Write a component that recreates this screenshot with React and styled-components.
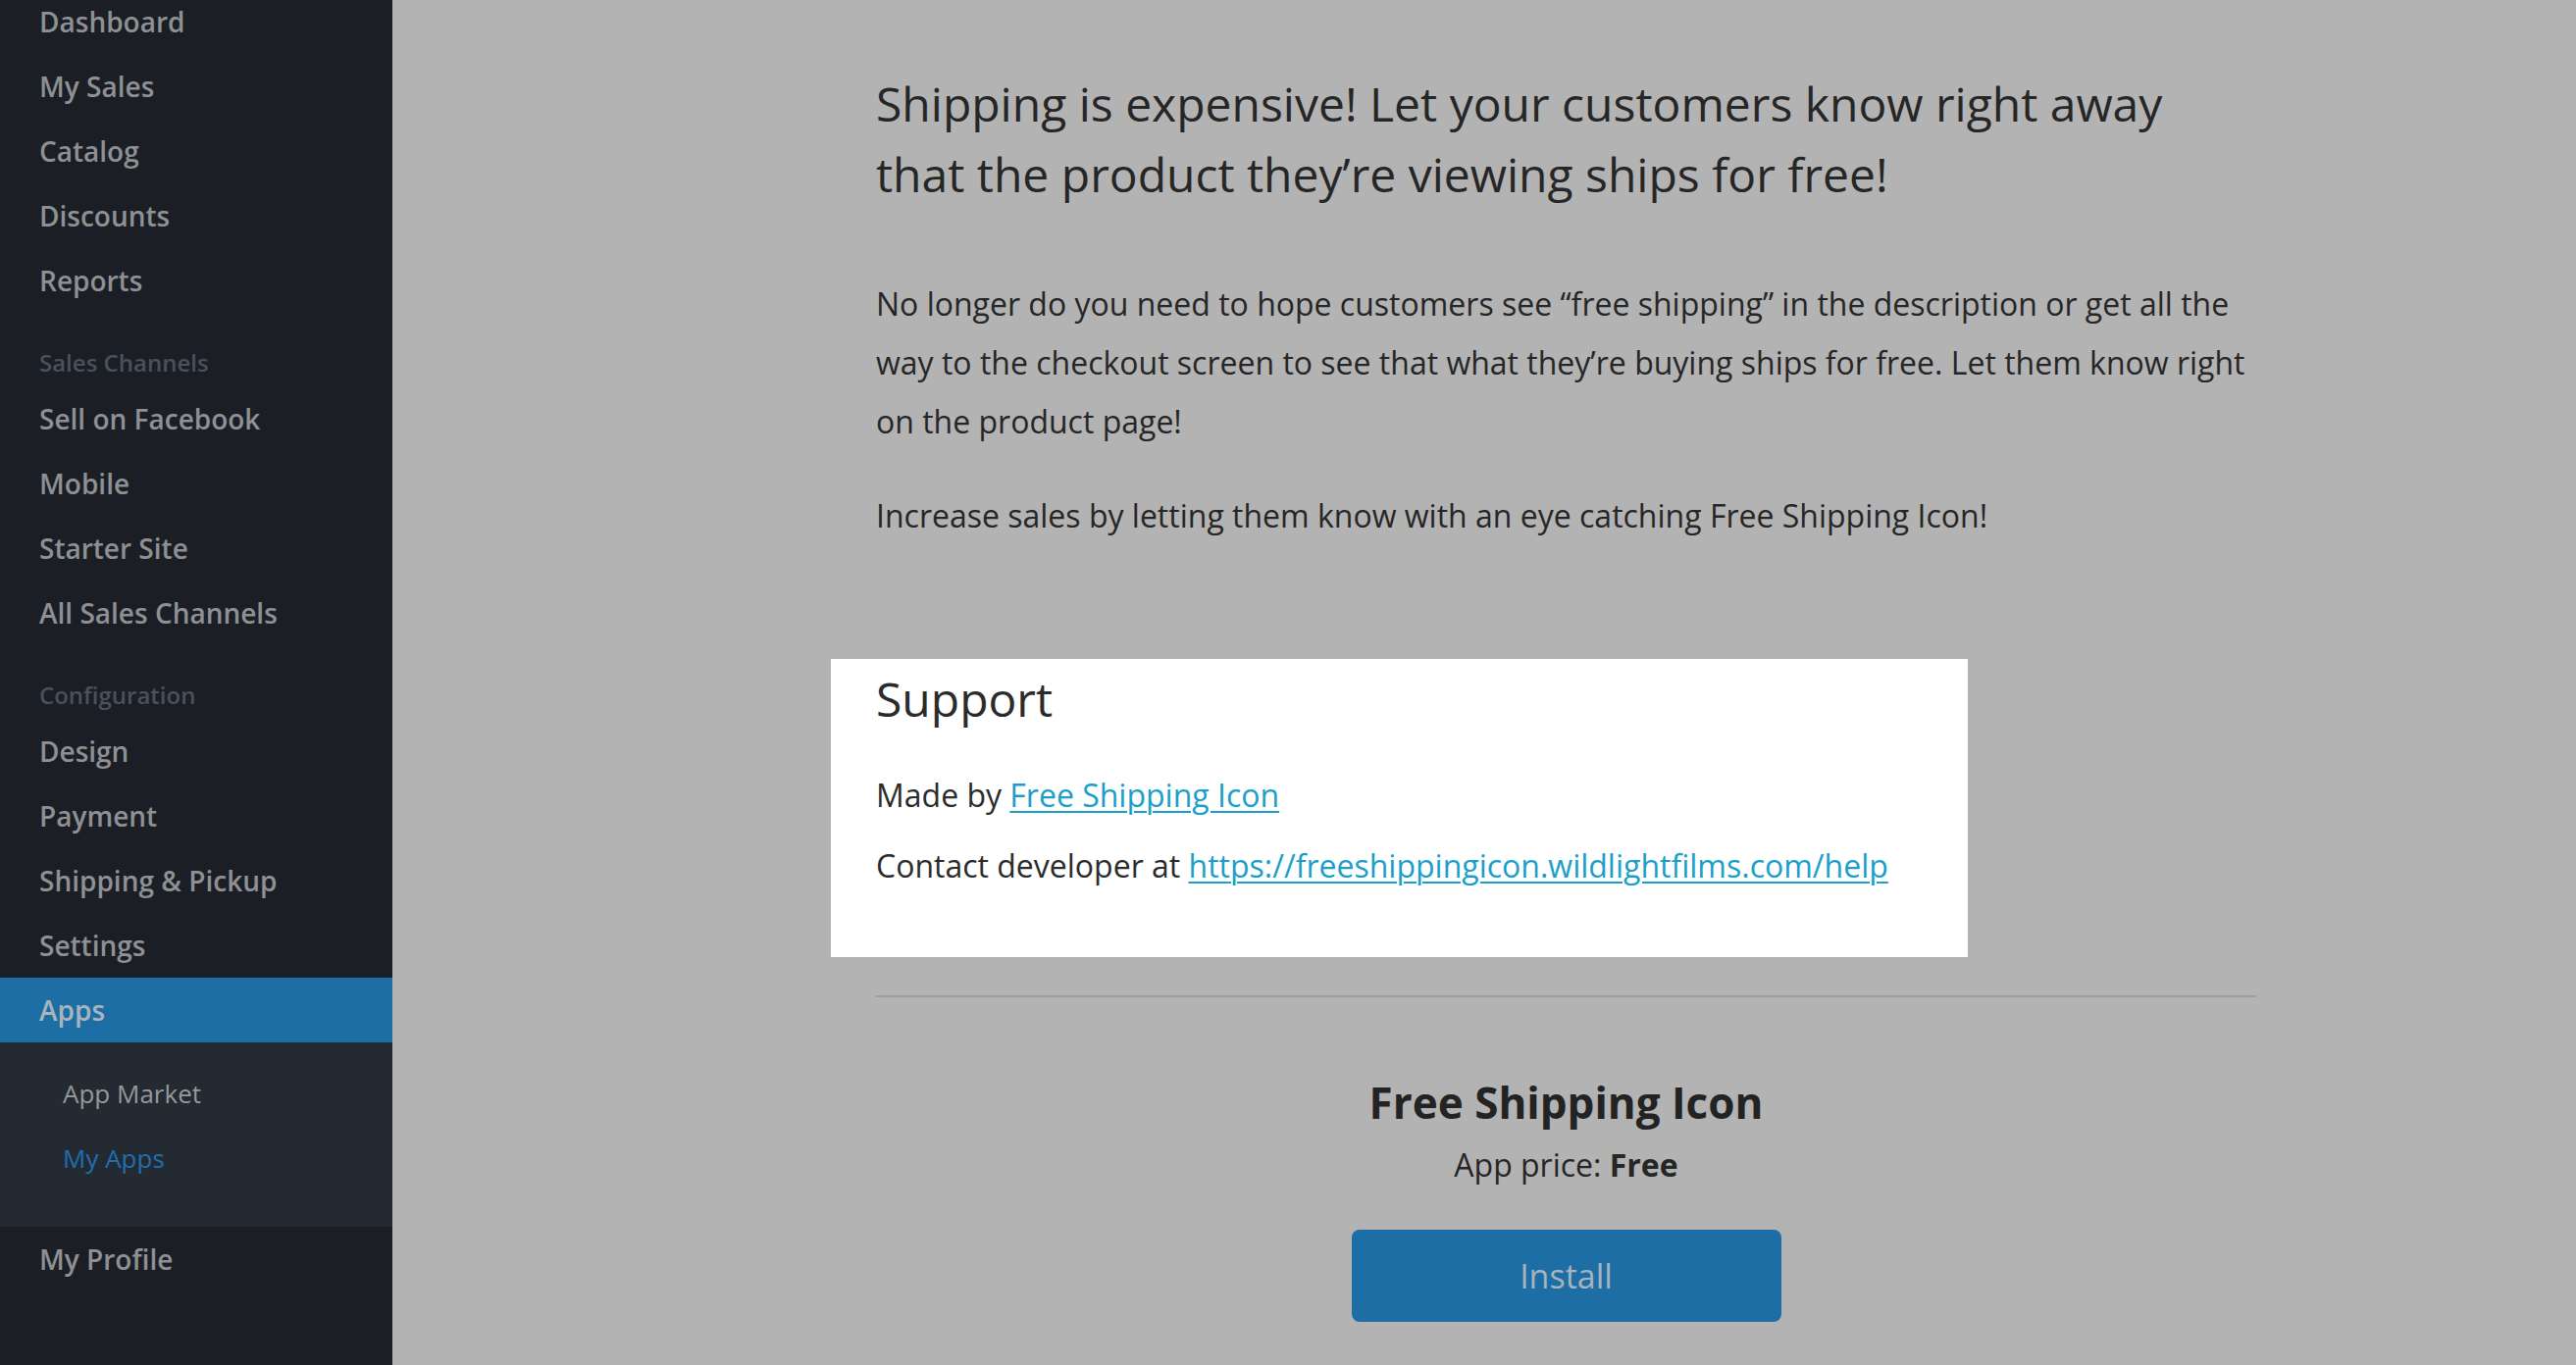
import React from "react";
import styled, { createGlobalStyle } from "styled-components";

const GlobalStyle = createGlobalStyle`
  html, body {
    margin: 0;
    padding: 0;
    height: 100%;
    overflow: hidden;
  }
  body {
    font-family: "Open Sans", "Noto Sans", "Liberation Sans", sans-serif;
    background: #b3b3b3;
  }
`;

const navTop = ["Dashboard", "My Sales", "Catalog", "Discounts", "Reports"];
const channels = ["Sell on Facebook", "Mobile", "Starter Site", "All Sales Channels"];
const config = ["Design", "Payment", "Shipping & Pickup", "Settings"];

const App = () => {
  return (
    <Page>
      <GlobalStyle />
      <Sidebar>
        <NavList>
          {navTop.map((n) => (
            <NavItem key={n}>{n}</NavItem>
          ))}
          <SectionLabel>Sales Channels</SectionLabel>
          {channels.map((c) => (
            <NavItem key={c}>{c}</NavItem>
          ))}
          <SectionLabel>Configuration</SectionLabel>
          {config.map((c) => (
            <NavItem key={c}>{c}</NavItem>
          ))}
          <NavItem active>Apps</NavItem>
          <SubMenu>
            <SubItem>App Market</SubItem>
            <SubItem current>My Apps</SubItem>
          </SubMenu>
          <NavItem>My Profile</NavItem>
        </NavList>
      </Sidebar>

      <Main>
        <Content>
          <Lead>
            Shipping is expensive! Let your customers know right away that the
            product they’re viewing ships for free!
          </Lead>
          <Text>
            No longer do you need to hope customers see “free shipping” in the
            description or get all the way to the checkout screen to see that
            what they’re buying ships for free. Let them know right on the
            product page!
          </Text>
          <Text spaced>
            Increase sales by letting them know with an eye catching Free
            Shipping Icon!
          </Text>

          <SupportBox>
            <SupportTitle>Support</SupportTitle>
            <SupportLine>
              Made by <Link href="#">Free Shipping Icon</Link>
            </SupportLine>
            <SupportLine>
              Contact developer at{" "}
              <Link href="#">https://freeshippingicon.wildlightfilms.com/help</Link>
            </SupportLine>
          </SupportBox>

          <Divider />

          <InstallBlock>
            <AppName>Free Shipping Icon</AppName>
            <Price>
              App price: <b>Free</b>
            </Price>
            <InstallButton>Install</InstallButton>
          </InstallBlock>
        </Content>
      </Main>
    </Page>
  );
};

// LAYOUT
const Page = styled.div`
  display: flex;
  width: 100%;
  height: 1392px;
  overflow: hidden;
`;

// SIDEBAR
const Sidebar = styled.aside`
  width: 400px;
  flex-shrink: 0;
  background: #1b1f25;
  overflow: hidden;
`;

const NavList = styled.nav`
  display: flex;
  flex-direction: column;
  margin-top: -11px;
`;

const NavItem = styled.div`
  height: 66px;
  line-height: 66px;
  padding: 0 40px;
  font-size: 28px;
  font-weight: 600;
  color: ${(p) => (p.active ? "#a9b4bd" : "#8e9193")};
  background: ${(p) => (p.active ? "#1d6ea5" : "transparent")};
  white-space: nowrap;
`;

const SectionLabel = styled.div`
  padding: 34px 40px 7px;
  line-height: 34px;
  font-size: 24px;
  font-weight: 600;
  color: #47525c;
`;

const SubMenu = styled.div`
  background: #242a31;
  padding: 19px 0 37px;
`;

const SubItem = styled.div`
  height: 66px;
  line-height: 66px;
  padding-left: 64px;
  font-size: 26px;
  color: ${(p) => (p.current ? "#1e6fae" : "#979899")};
`;

// MAIN
const Main = styled.main`
  flex: 1;
  background: #b3b3b3;
  overflow: hidden;
`;

const Content = styled.div`
  width: 1407px;
  margin-left: 493px;
  padding-top: 70px;
  color: #262626;
`;

const Lead = styled.h1`
  max-width: 1345px;
  margin: 0 0 66px;
  font-size: 48px;
  line-height: 72px;
  font-weight: 400;
  color: #262626;
`;

const Text = styled.p`
  margin: ${(p) => (p.spaced ? "36px 0 0" : "0")};
  font-size: 32px;
  line-height: 60px;
`;

const SupportBox = styled.section`
  width: 1159px;
  box-sizing: border-box;
  margin: 116px 0 0 -46px;
  padding: 8px 46px 57px;
  background: #ffffff;
`;

const SupportTitle = styled.h2`
  margin: 0 0 29px;
  font-size: 48px;
  line-height: 66px;
  font-weight: 400;
  color: #2b2b2b;
`;

const SupportLine = styled.div`
  font-size: 32px;
  line-height: 72px;
  color: #2b2b2b;
`;

const Link = styled.a`
  color: #1b9fca;
  text-decoration: underline;
  text-underline-offset: 4px;
  text-decoration-thickness: 2px;
`;

const Divider = styled.hr`
  margin: 39px 0 0;
  border: 0;
  height: 2px;
  background: #999ea1;
`;

const InstallBlock = styled.div`
  display: flex;
  flex-direction: column;
  align-items: center;
  padding-top: 77px;
`;

const AppName = styled.h3`
  margin: 0;
  font-size: 44px;
  line-height: 60px;
  font-weight: 700;
  color: #232323;
`;

const Price = styled.div`
  margin-top: 9px;
  font-size: 32px;
  line-height: 50px;
  color: #262626;
  & b {
    font-weight: 700;
  }
`;

const InstallButton = styled.button`
  margin-top: 41px;
  width: 438px;
  height: 94px;
  border: 0;
  border-radius: 8px;
  background: #1d6ea5;
  color: #a7b3bd;
  font-family: inherit;
  font-size: 34px;
  cursor: pointer;
`;

export default App;
